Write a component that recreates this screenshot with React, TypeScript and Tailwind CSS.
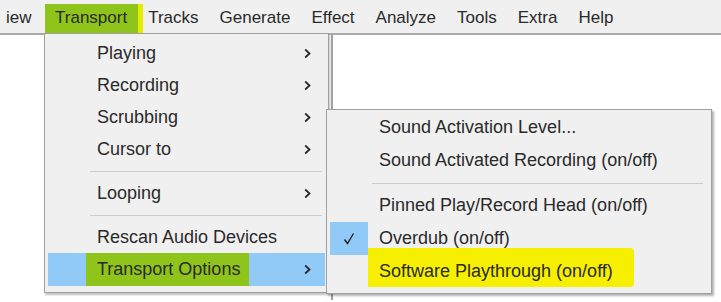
const menuBar = ['iew', 'Transport', 'Tracks', 'Generate', 'Effect', 'Analyze', 'Tools', 'Extra', 'Help'];

function Chevron() {
  return (
    <svg width="7" height="11" viewBox="0 0 7 11" className="shrink-0">
      <polyline points="1.2,1.5 5.5,5.5 1.2,9.5" fill="none" stroke="#2a2a2a" strokeWidth="1.8" />
    </svg>
  );
}

function Separator({ right }: { right: string }) {
  return (
    <div className={`flex h-[12px] items-center pl-[42px] ${right}`}>
      <div className="h-px flex-1 bg-[#cdcdcd]" />
    </div>
  );
}

function MenuRow({ label, arrow = true }: { label: string; arrow?: boolean }) {
  return (
    <div className="flex h-[32px] items-center pr-[14px]">
      <div className="w-[38px] shrink-0" />
      <span className="ml-[11px] flex-1">{label}</span>
      {arrow && <Chevron />}
    </div>
  );
}

function SubRow({ label, checked = false }: { label: string; checked?: boolean }) {
  return (
    <div className="flex h-[33px] items-center">
      <div
        className={`flex h-full w-[38px] shrink-0 items-center justify-center ${checked ? 'bg-[#91c9f7]' : ''}`}
      >
        {checked && (
          <svg width="12" height="13" viewBox="0 0 12 13">
            <polyline points="1.5,7.5 4.5,11.5 10.5,1.5" fill="none" stroke="#1e1e1e" strokeWidth="1.4" />
          </svg>
        )}
      </div>
      <span className="ml-[11px]">{label}</span>
    </div>
  );
}

export default function App() {
  return (
    <div className="relative h-[302px] w-[721px] overflow-hidden bg-white font-['Liberation_Sans',Arial,sans-serif] text-[#2a2a2a]">
      {/* menu bar */}
      <div className="flex h-[35px] items-stretch border-b-2 border-[#a9a9a9] bg-[#f0f0f0] text-[17px]">
        {menuBar.map((item, i) => (
          <div
            key={item}
            className={`relative flex items-center pt-[2px] ${i === 0 ? 'pl-[6px] pr-[13px]' : 'px-[10.5px]'}`}
          >
            {item === 'Transport' && (
              <span className="absolute bottom-[-1px] left-0 right-[-5px] top-[4px] border-r-[5px] border-[#e4ec00] bg-[#8fc41a]" />
            )}
            <span className="relative">{item}</span>
          </div>
        ))}
      </div>

      {/* window content behind the menus */}
      <div className="flex h-[265px]">
        <div className="w-[331px] shrink-0" />
        <div className="flex-1 border-l-2 border-[#a3a3a3] bg-white" />
      </div>

      {/* Transport dropdown */}
      <div className="absolute left-[44px] top-[33px] w-[285px] border border-[#a0a0a0] bg-[#f0f0f0] px-[3px] pb-[6px] pt-[3px] text-[18px] shadow-[1px_2px_2px_rgba(0,0,0,0.25)]">
        <MenuRow label="Playing" />
        <MenuRow label="Recording" />
        <MenuRow label="Scrubbing" />
        <MenuRow label="Cursor to" />
        <Separator right="pr-[3px]" />
        <MenuRow label="Looping" />
        <Separator right="pr-[3px]" />
        <MenuRow label="Rescan Audio Devices" arrow={false} />
        <div className="flex h-[33px] items-center bg-[#91c9f7] pr-[14px]">
          <div className="w-[38px] shrink-0" />
          <span className="flex h-full items-center bg-[#8fc41a] pl-[11px] pr-[9px]">Transport Options</span>
          <span className="flex-1" />
          <Chevron />
        </div>
      </div>

      {/* Transport Options submenu */}
      <div className="absolute left-[326px] top-[109px] w-[386px] border border-[#a0a0a0] bg-[#f0f0f0] pb-[5px] pl-[3px] pr-[3px] pt-[1px] text-[18px] shadow-[2px_2px_2px_rgba(0,0,0,0.3)]">
        <SubRow label="Sound Activation Level..." />
        <SubRow label="Sound Activated Recording (on/off)" />
        <Separator right="pr-[5px]" />
        <SubRow label="Pinned Play/Record Head (on/off)" />
        <SubRow label="Overdub (on/off)" checked />
        <div className="flex h-[33px] items-center">
          <div className="w-[38px] shrink-0" />
          <span className="relative pl-[11px] pr-[21px]">
            <span className="absolute bottom-[-2px] left-0 right-0 top-[-10px] rounded-r-[4px] bg-[#f6ef00]" />
            <span className="relative">Software Playthrough (on/off)</span>
          </span>
        </div>
      </div>
    </div>
  );
}
